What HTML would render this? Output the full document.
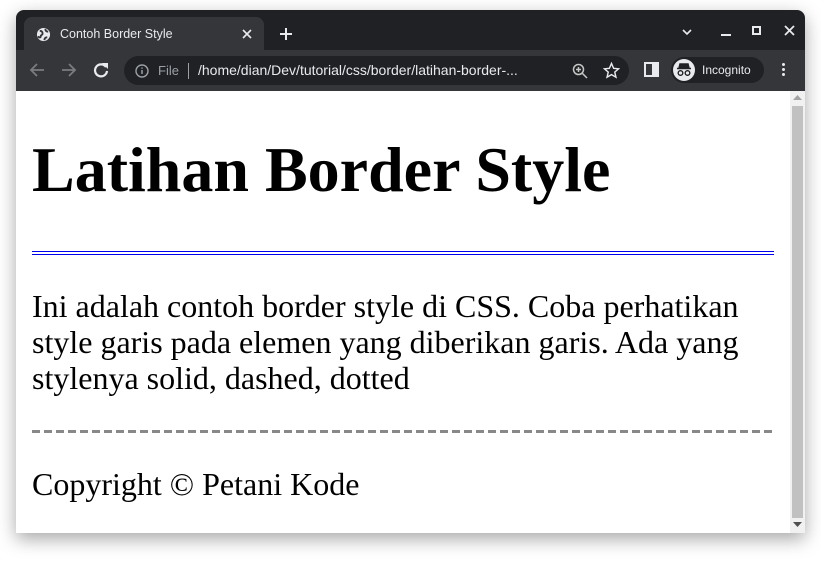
<!DOCTYPE html>
<html><head><meta charset="utf-8">
<style>
*{margin:0;padding:0;box-sizing:border-box}
html,body{width:821px;height:566px;overflow:hidden;background:#fff;position:relative;font-family:"Liberation Sans",sans-serif}
.win{position:absolute;left:16px;top:10px;width:789px;height:523px;background:#202124;border-radius:8px 8px 0 0;box-shadow:0 6px 18px rgba(0,0,0,.35);overflow:hidden}
.tab{position:absolute;left:8px;top:7px;width:240px;height:34px;background:#35363a;border-radius:8px 8px 0 0}
.tab .t{position:absolute;left:36px;top:10px;color:#e8eaed;font-size:12.5px}
.tbar{position:absolute;left:0;top:40px;width:789px;height:41px;background:#35363a}
.omni{position:absolute;left:108px;top:6px;width:505px;height:29px;background:#202124;border-radius:15px}
.omni .f{position:absolute;left:34px;top:7px;color:#9aa0a6;font-size:13px}
.omni .sep{position:absolute;left:64px;top:7px;width:1px;height:16px;background:#9aa0a6}
.omni .u{position:absolute;left:74px;top:6px;color:#e8eaed;font-size:14px;white-space:nowrap}
.inc{position:absolute;left:655px;top:7px;width:93px;height:26px;background:#202124;border-radius:13px}
.inc .t{position:absolute;left:31px;top:6px;color:#e8eaed;font-size:12px}
.content{position:absolute;left:0;top:81px;width:774px;height:442px;background:#fff}
.sb{position:absolute;left:774px;top:81px;width:15px;height:442px;background:#f1f1f1}
.thumb{position:absolute;left:2px;top:15px;width:11px;height:412px;background:#c1c1c1}
.s{font-family:"Liberation Serif",serif;color:#000;position:absolute;left:16px;white-space:nowrap}
h1{font-size:64px;line-height:74px;font-weight:bold;top:42px}
.p{font-size:32px;line-height:36px;top:197px}
.c{font-size:32px;line-height:36px;top:375px}
.dbl{position:absolute;left:16px;top:160px;width:742px;border-top:4px double #0000ee}
.dsh{position:absolute;left:16px;top:339px;width:742px;height:3px;background:repeating-linear-gradient(90deg,#888 0 8px,transparent 8px 12px)}
</style></head><body>
<div class="win">
 <div class="tab">
  <svg style="position:absolute;left:12px;top:10px" width="15" height="15" viewBox="0 0 16 16"><circle cx="8" cy="8" r="7" fill="#e8eaed"/><path d="M4 4c2 0 3 1 3 3s-2 1-2 3-2 1-3 0M10 2c0 2 1 3 3 3M9 14c0-2 1-3 3-3" stroke="#35363a" stroke-width="2" fill="none"/></svg>
  <div class="t">Contoh Border Style</div>
  <svg style="position:absolute;left:218px;top:12px" width="10" height="10"><path d="M1 1L9 9M9 1L1 9" stroke="#e8eaed" stroke-width="1.6"/></svg>
 </div>
 <svg style="position:absolute;left:263px;top:17px" width="14" height="14"><path d="M7 1v12M1 7h12" stroke="#e8eaed" stroke-width="2"/></svg>
 <svg style="position:absolute;left:666px;top:19px" width="10" height="8"><path d="M1 1l4 4 4-4" stroke="#e8eaed" stroke-width="1.6" fill="none"/></svg>
 <div style="position:absolute;left:705px;top:24px;width:10px;height:2px;background:#e8eaed"></div>
 <div style="position:absolute;left:736px;top:16px;width:9px;height:9px;border:2px solid #e8eaed"></div>
 <svg style="position:absolute;left:768px;top:15px" width="11" height="11"><path d="M1 1L10 10M10 1L1 10" stroke="#e8eaed" stroke-width="1.8"/></svg>
 <div class="tbar">
  <svg style="position:absolute;left:13px;top:12px" width="16" height="16"><path d="M15 8H2M8 2L2 8l6 6" stroke="#7a7c80" stroke-width="1.8" fill="none"/></svg>
  <svg style="position:absolute;left:45px;top:12px" width="16" height="16"><path d="M1 8h13M8 2l6 6-6 6" stroke="#7a7c80" stroke-width="1.8" fill="none"/></svg>
  <svg style="position:absolute;left:77px;top:12px" width="16" height="16"><path d="M13 5A6 6 0 1 0 14 9" stroke="#e8eaed" stroke-width="2.2" fill="none"/><path d="M9 1h6v6z" fill="#e8eaed"/></svg>
  <div class="omni">
   <svg style="position:absolute;left:11px;top:8px" width="14" height="14"><circle cx="7" cy="7" r="6" stroke="#9aa0a6" stroke-width="1.4" fill="none"/><path d="M7 6v4M7 3.5v1.2" stroke="#9aa0a6" stroke-width="1.5"/></svg>
   <div class="f">File</div><div class="sep"></div>
   <div class="u">/home/dian/Dev/tutorial/css/border/latihan-border-...</div>
   <svg style="position:absolute;left:448px;top:7px" width="16" height="16"><circle cx="6.5" cy="6.5" r="5" stroke="#c4c7c5" stroke-width="1.5" fill="none"/><path d="M10 10l5 5M6.5 4v5M4 6.5h5" stroke="#c4c7c5" stroke-width="1.5"/></svg>
   <svg style="position:absolute;left:479px;top:6px" width="17" height="17" viewBox="0 0 24 24"><path d="M12 2l3 7 7 .6-5.4 4.7 1.7 7.2L12 17.8 5.7 21.5l1.7-7.2L2 9.6 9 9z" stroke="#e8eaed" stroke-width="2" fill="none"/></svg>
  </div>
  <div style="position:absolute;left:628px;top:12px;width:15px;height:15px;border:2px solid #e8eaed;border-right-width:7px"></div>
  <div class="inc">
   <div style="position:absolute;left:2px;top:2px;width:22px;height:22px;border-radius:50%;background:#e8eaed"></div>
   <svg style="position:absolute;left:5px;top:6px" width="16" height="14"><path d="M4 1h8l1 4H3z M1 5.5h14" stroke="#202124" stroke-width="1.5" fill="#202124"/><circle cx="4.5" cy="10" r="2.3" stroke="#202124" stroke-width="1.4" fill="none"/><circle cx="11.5" cy="10" r="2.3" stroke="#202124" stroke-width="1.4" fill="none"/></svg>
   <div class="t">Incognito</div>
  </div>
  <div style="position:absolute;left:766px;top:13px;width:3px;height:3px;background:#e8eaed;border-radius:50%;box-shadow:0 5px 0 #e8eaed,0 10px 0 #e8eaed"></div>
 </div>
 <div class="content">
  <h1 class="s">Latihan Border Style</h1>
  <div class="dbl"></div>
  <div class="s p">Ini adalah contoh border style di CSS. Coba perhatikan<br>style garis pada elemen yang diberikan garis. Ada yang<br>stylenya solid, dashed, dotted</div>
  <div class="dsh"></div>
  <div class="s c">Copyright © Petani Kode</div>
 </div>
 <div class="sb">
  <svg style="position:absolute;left:3px;top:4px" width="9" height="6"><path d="M4.5 0L9 5H0z" fill="#a3a3a3"/></svg>
  <div class="thumb"></div>
  <svg style="position:absolute;left:3px;top:431px" width="9" height="6"><path d="M0 0h9L4.5 5z" fill="#505050"/></svg>
 </div>
</div>
</body></html>
